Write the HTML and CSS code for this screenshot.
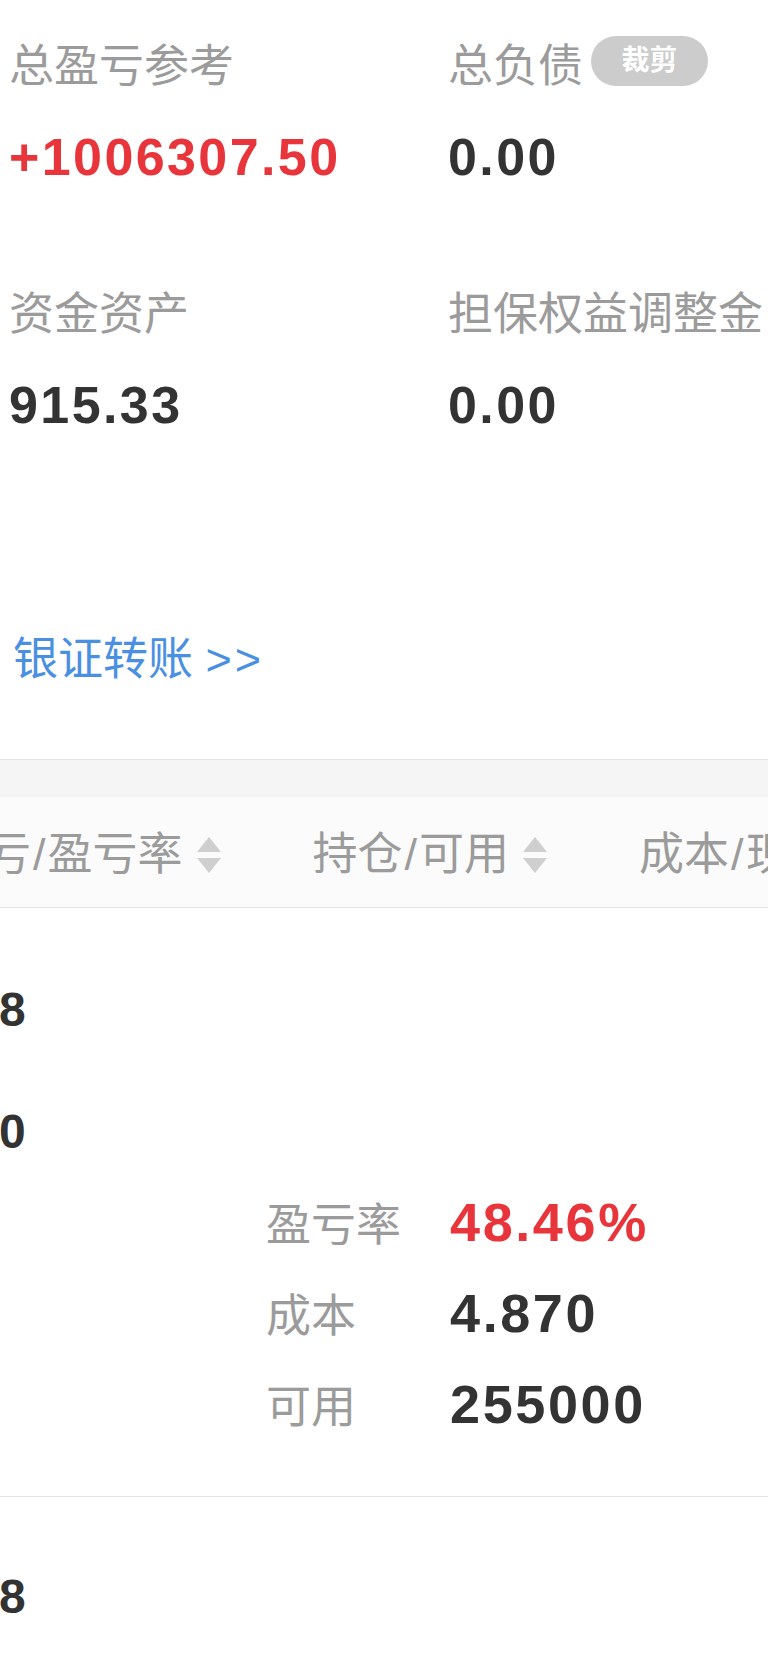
FILE: index.html
```html
<!DOCTYPE html>
<html lang="zh-CN">
<head>
  <meta charset="UTF-8" />
  <title>资金持仓</title>
  <link rel="stylesheet" href="styles.css">
</head>
<body>

  <!-- 资产概览 -->
  <div class="summary">
    <div class="item">
      <div class="label">总盈亏参考</div>
      <div class="value up">+1006307.50</div>
    </div>
    <div class="item">
      <div class="label">总负债</div>
      <div class="value">0.00</div>
    </div>
    <div class="item">
      <div class="label">资金资产</div>
      <div class="value">915.33</div>
    </div>
    <div class="item">
      <div class="label">担保权益调整金</div>
      <div class="value">0.00</div>
    </div>
  </div>

  <a class="transfer" href="#">银证转账 <span class="arrows">&gt;&gt;</span></a>

  <!-- 持仓列表 -->
  <div class="positions">
    <div class="gap-band"></div>
    <div class="thead">
      <div class="track">
        <div class="th">
          <span class="th-text">盈亏<span class="slash">/</span>盈亏率</span>
          <svg class="sort" viewBox="0 0 24 38"><path d="M12 1 L24 16 L0 16 Z"/><path d="M0 22 L24 22 L12 37 Z"/></svg>
        </div>
        <div class="th">
          <span class="th-text">持仓<span class="slash">/</span>可用</span>
          <svg class="sort" viewBox="0 0 24 38"><path d="M12 1 L24 16 L0 16 Z"/><path d="M0 22 L24 22 L12 37 Z"/></svg>
        </div>
        <div class="th">
          <span class="th-text">成本<span class="slash">/</span>现价</span>
          <svg class="sort" viewBox="0 0 24 38"><path d="M12 1 L24 16 L0 16 Z"/><path d="M0 22 L24 22 L12 37 Z"/></svg>
        </div>
      </div>
    </div>

    <div class="row">
      <div class="cell">
        <div>8</div>
        <div class="second">0</div>
      </div>
      <div class="detail">
        <div class="d-label">盈亏率</div><div class="d-value up">48.46%</div>
        <div class="d-label">成本</div><div class="d-value">4.870</div>
        <div class="d-label">可用</div><div class="d-value">255000</div>
      </div>
    </div>

    <div class="row">
      <div class="cell">
        <div>8</div>
      </div>
    </div>
  </div>

  <div class="crop-badge">裁剪</div>

</body>
</html>
```

FILE: styles.css
```css
html, body {
  margin: 0;
  padding: 0;
  background: #fff;
  font-family: "Liberation Sans", "Noto Sans CJK SC", sans-serif;
  color: #333;
  overflow: hidden;
}

/* 资产概览 */
.summary {
  display: grid;
  grid-template-columns: 439px 1fr;
  row-gap: 101px;
  padding: 40px 0 0 9px;
}

.label {
  font-size: 45px;
  line-height: 54px;
  color: #9b9b9b;
  white-space: nowrap;
}

.value {
  margin-top: 33px;
  font-size: 52px;
  line-height: 60px;
  font-weight: bold;
  letter-spacing: 2.4px;
  color: #333;
}

.up {
  color: #e8353b;
}

.transfer {
  display: block;
  margin: 198px 0 72px 13px;
  font-size: 45px;
  line-height: 54px;
  color: #4a90e2;
  text-decoration: none;
}

.transfer .arrows {
  letter-spacing: 3px;
}

/* 持仓列表 */
.positions {
  border-top: 1px solid #e3e3e3;
  overflow: hidden;
}

.gap-band {
  height: 37px;
  background: #f5f5f5;
}

.thead {
  height: 111px;
  box-sizing: border-box;
  padding-top: 5px;
  background: #fbfbfb;
  border-bottom: 1px solid #e3e3e3;
  display: flex;
  align-items: center;
}

.track {
  display: flex;
  gap: 92px;
  margin-left: -59px;
  white-space: nowrap;
}

.th {
  display: flex;
  align-items: center;
  gap: 14px;
  font-size: 45px;
  line-height: 54px;
  color: #9b9b9b;
}

.th .slash {
  padding: 0 2px;
}

.sort {
  width: 24px;
  height: 38px;
  fill: #cfcfcf;
  flex: none;
}

.row {
  border-bottom: 1px solid #e3e3e3;
  padding: 72px 0 47px;
}

.row:last-child {
  border-bottom: none;
  padding-top: 70px;
}

.cell {
  width: 26px;
  margin-left: -1px;
  text-align: right;
  font-size: 48px;
  line-height: 60px;
  font-weight: bold;
  color: #333;
}

.cell .second {
  margin-top: 62px;
}

.detail {
  display: grid;
  grid-template-columns: 184px auto;
  grid-auto-rows: 91px;
  align-items: center;
  margin: 14px 0 0 266px;
}

.d-label {
  font-size: 45px;
  color: #9b9b9b;
}

.d-value {
  font-size: 54px;
  font-weight: bold;
  letter-spacing: 2.6px;
  color: #333;
}

.d-value.up {
  color: #e8353b;
}

/* 截图工具的裁剪按钮 */
.crop-badge {
  position: absolute;
  top: 36px;
  left: 591px;
  width: 117px;
  height: 50px;
  border-radius: 25px;
  background: #cccccc;
  color: #fff;
  font-size: 28px;
  font-weight: bold;
  line-height: 50px;
  text-align: center;
}
```
